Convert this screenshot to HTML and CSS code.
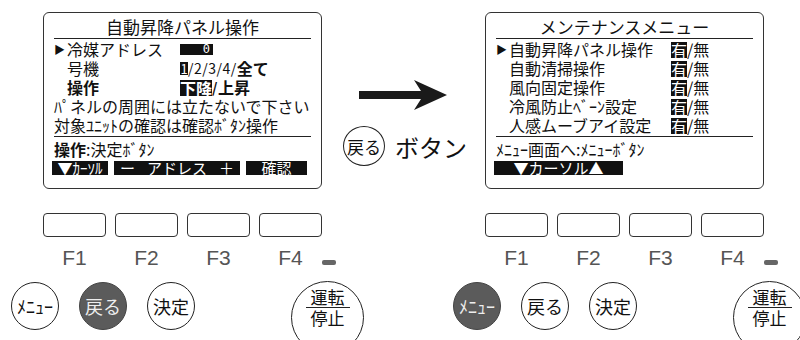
FILE: index.html
```html
<!DOCTYPE html>
<html lang="ja">
<head>
  <meta charset="UTF-8" />
  <meta name="viewport" content="width=device-width, initial-scale=1.0" />
  <title>自動昇降パネル操作</title>
  <link rel="stylesheet" href="styles.css">
</head>
<body>
  <div class="top">
    <div class="screen">
      <div class="title">自動昇降パネル操作</div>
      <div class="rows">
        <div class="label"><span class="cursor">▶</span>冷媒アドレス</div>
        <div class="value"><span class="inv addr">0</span></div>
        <div class="label"><span class="cursor"></span>号機</div>
        <div class="value"><span class="inv num">1</span><span class="nums">/2/3/4/</span><b>全て</b></div>
        <div class="label bold"><span class="cursor"></span>操作</div>
        <div class="value bold"><span class="inv">下降</span><span class="nums">/</span>上昇</div>
      </div>
      <div class="msg">
        <div>ﾊﾟネルの周囲には立たないで下さい</div>
        <div>対象ﾕﾆｯﾄの確認は確認ﾎﾞﾀﾝ操作</div>
      </div>
      <div class="hint"><b>操作</b>:決定ﾎﾞﾀﾝ</div>
      <div class="bar">
        <span class="seg s1">▼ｶｰｿﾙ</span>
        <span class="seg s2"><span>ー</span><span>アドレス</span><span>＋</span></span>
        <span class="seg s3">確認</span>
      </div>
    </div>

    <div class="note">
      <svg class="arrow" width="88" height="30" viewBox="0 0 88 30">
        <path d="M0 11 H62 L55 0 L88 15 L55 30 L62 19 H0 Z" fill="#1a1a1a" />
      </svg>
      <div class="note-line">
        <span class="ring">戻る</span>
        <span class="note-text">ボタン</span>
      </div>
    </div>

    <div class="screen">
      <div class="title">メンテナンスメニュー</div>
      <div class="rows menu">
        <div class="label"><span class="cursor">▶</span>自動昇降パネル操作</div>
        <div class="value"><span class="inv">有</span>/無</div>
        <div class="label"><span class="cursor"></span>自動清掃操作</div>
        <div class="value"><span class="inv">有</span>/無</div>
        <div class="label"><span class="cursor"></span>風向固定操作</div>
        <div class="value"><span class="inv">有</span>/無</div>
        <div class="label"><span class="cursor"></span>冷風防止ﾍﾞｰﾝ設定</div>
        <div class="value"><span class="inv">有</span>/無</div>
        <div class="label"><span class="cursor"></span>人感ムーブアイ設定</div>
        <div class="value"><span class="inv">有</span>/無</div>
      </div>
      <div class="hint">ﾒﾆｭｰ画面へ:ﾒﾆｭｰﾎﾞﾀﾝ</div>
      <div class="bar">
        <span class="seg s4">▼カーソル▲</span>
      </div>
    </div>
  </div>

  <div class="bottom">
    <div class="remote">
      <div class="fkeys">
        <span class="fkey"></span><span class="fkey"></span><span class="fkey"></span><span class="fkey"></span>
      </div>
      <div class="flabels">
        <span>F1</span><span>F2</span><span>F3</span><span>F4</span>
        <i class="lamp"></i>
      </div>
      <div class="buttons">
        <span class="btn">ﾒﾆｭｰ</span>
        <span class="btn on">戻る</span>
        <span class="btn">決定</span>
        <span class="btn big"><span>運転</span><i class="rule"></i><span>停止</span></span>
      </div>
    </div>
    <div class="remote">
      <div class="fkeys">
        <span class="fkey"></span><span class="fkey"></span><span class="fkey"></span><span class="fkey"></span>
      </div>
      <div class="flabels">
        <span>F1</span><span>F2</span><span>F3</span><span>F4</span>
        <i class="lamp"></i>
      </div>
      <div class="buttons">
        <span class="btn on">ﾒﾆｭｰ</span>
        <span class="btn">戻る</span>
        <span class="btn">決定</span>
        <span class="btn big"><span>運転</span><i class="rule"></i><span>停止</span></span>
      </div>
    </div>
  </div>
</body>
</html>
```

FILE: styles.css
```css
body {
  margin: 0;
  width: 800px;
  height: 340px;
  overflow: hidden;
  background: #fff;
  color: #111;
  font-family: "Noto Sans CJK JP", sans-serif;
}

.top {
  display: flex;
  padding: 12px 0 0 43px;
}

/* LCD screens */
.screen {
  flex: none;
  width: 279px;
  height: 177px;
  box-sizing: border-box;
  border: 1.5px solid #333;
  border-radius: 6px;
  padding: 3px 10px 0;
}
.title {
  font-size: 17px;
  line-height: 22px;
  text-align: center;
  border-bottom: 1.5px solid #222;
}
.rows {
  margin-top: 1px;
  display: grid;
  grid-template-columns: 126px auto;
  font-size: 16px;
  line-height: 19px;
}
.rows.menu {
  grid-template-columns: 175px auto;
  border-bottom: 1.5px solid #222;
  padding-bottom: 1px;
}
.cursor {
  display: inline-block;
  width: 13px;
  font-size: 11px;
  vertical-align: top;
}
.bold,
b {
  font-weight: bold;
}
.value {
  display: flex;
  align-items: center;
}
.inv {
  background: #111;
  color: #fff;
  line-height: 16px;
}
.inv.addr {
  display: inline-block;
  width: 33px;
  height: 11px;
  line-height: 11px;
  text-align: right;
  font-family: "DejaVu Sans Mono", monospace;
  font-size: 12px;
  padding-right: 3px;
  box-sizing: border-box;
}
.inv.num {
  display: inline-block;
  width: 8px;
  height: 13px;
  line-height: 13px;
  text-align: center;
  font-size: 13px;
}
.nums {
  font-size: 14px;
  letter-spacing: 0.5px;
}
.msg {
  font-size: 16px;
  line-height: 19px;
  border-bottom: 1.5px solid #222;
  padding-bottom: 1px;
}
.hint {
  font-size: 16px;
  line-height: 19px;
  margin-top: 3px;
}
.bar {
  display: flex;
  gap: 6px;
  margin-top: 2px;
  margin-left: -2px;
}
.seg {
  display: flex;
  align-items: center;
  justify-content: center;
  height: 14px;
  background: #111;
  color: #fff;
  font-size: 15px;
  line-height: 14px;
}
.s1 { width: 56px; }
.s2 { width: 126px; justify-content: space-around; }
.s3 { width: 61px; }
.s4 { width: 129px; }

/* arrow and note between the screens */
.note {
  flex: none;
  width: 163px;
  display: flex;
  flex-direction: column;
  align-items: flex-start;
}
.arrow {
  margin: 68px 0 0 37px;
}
.note-line {
  display: flex;
  align-items: center;
  gap: 10px;
  margin: 16px 0 0 21px;
  white-space: nowrap;
}
.ring {
  display: flex;
  align-items: center;
  justify-content: center;
  width: 42px;
  height: 40px;
  box-sizing: border-box;
  border: 1.2px solid #222;
  border-radius: 50%;
  font-size: 17px;
}
.note-text {
  font-size: 24px;
}

/* remote control buttons */
.bottom {
  display: flex;
}
.remote {
  flex: none;
  width: 442px;
  box-sizing: border-box;
  padding-left: 11px;
}
.fkeys,
.flabels {
  display: flex;
  gap: 9px;
  margin-left: 32px;
}
.fkeys {
  margin-top: 24px;
}
.fkey {
  width: 63px;
  height: 24px;
  box-sizing: border-box;
  border: 1.2px solid #333;
  border-radius: 4px;
}
.flabels {
  margin-top: 11px;
  height: 20px;
}
.flabels span {
  width: 63px;
  text-align: center;
  font-family: "Liberation Sans", sans-serif;
  font-size: 21px;
  line-height: 20px;
  color: #555;
}
.lamp {
  width: 14px;
  height: 5px;
  margin: 12px 0 0 -9px;
  border-radius: 2px;
  background: #666;
}
.buttons {
  display: flex;
  align-items: flex-start;
  gap: 20px;
  margin-top: 14px;
}
.btn {
  display: flex;
  align-items: center;
  justify-content: center;
  width: 48px;
  height: 48px;
  box-sizing: border-box;
  border: 1.2px solid #222;
  border-radius: 50%;
  font-size: 18px;
}
.btn.on {
  background: #5b5b5b;
  border-color: #444;
  color: #eee;
}
.btn.big {
  flex-direction: column;
  justify-content: flex-start;
  width: 73px;
  height: 73px;
  margin-left: 76px;
  margin-top: -1px;
  padding-top: 5px;
  line-height: 20px;
  font-size: 17px;
}
.rule {
  width: 44px;
  height: 1.2px;
  background: #222;
}
```
